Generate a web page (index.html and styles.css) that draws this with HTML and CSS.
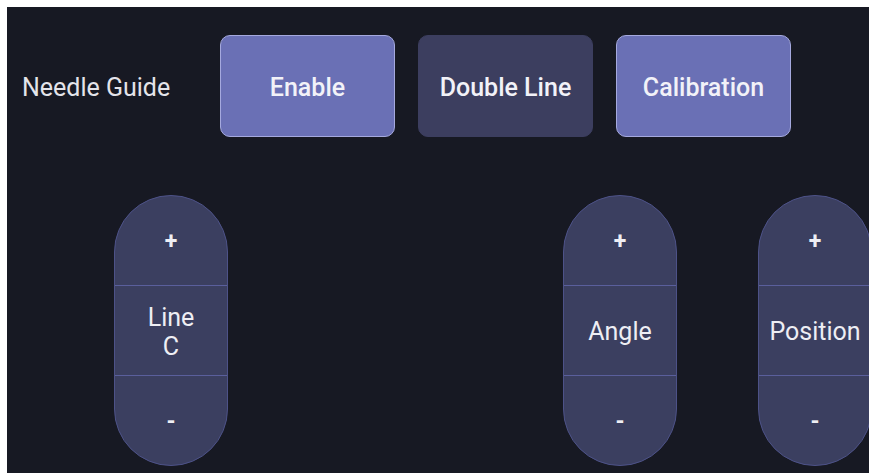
FILE: index.html
```html
<!DOCTYPE html>
<html lang="en">
<head>
  <meta charset="UTF-8">
  <meta name="viewport" content="width=device-width, initial-scale=1.0">
  <title>Needle Guide</title>
  <link rel="stylesheet" href="styles.css">
</head>

<body>
<div class="panel">
  <div class="guide-row">
    <span class="label">Needle Guide</span>
    <button class="btn on">Enable</button>
    <button class="btn">Double Line</button>
    <button class="btn on">Calibration</button>
  </div>
  <div class="pill-row">
    <div class="pill">
      <div class="step">+</div>
      <div class="name">Line<br>C</div>
      <div class="step">-</div>
    </div>
    <div class="pill angle">
      <div class="step">+</div>
      <div class="name">Angle</div>
      <div class="step">-</div>
    </div>
    <div class="pill position">
      <div class="step">+</div>
      <div class="name">Position</div>
      <div class="step">-</div>
    </div>
  </div>
</div>
</body>
</html>
```

FILE: styles.css
```css
* {
  padding: 0;
  margin: 0;
  box-sizing: border-box;
}

html {
  background: #fff;
}

body {
  padding: 7px 0 0 7px;
  overflow: hidden;
  height: 473px;
  font-family: Roboto, "Noto Sans", sans-serif;
}

.panel {
  width: 900px;
  height: 480px;
  background: #171923;
  color: #eeeef4;
}

.guide-row {
  display: flex;
  align-items: center;
  padding: 28px 0 0 15px;
}

.label {
  width: 198px;
  padding-top: 3px;
  font-size: 25px;
  color: #e4e4ea;
}

.btn {
  width: 175px;
  height: 102px;
  margin-right: 23px;
  padding-top: 3px;
  border: 1px solid #3c3e5f;
  border-radius: 10px;
  background: #3c3e5f;
  color: #f2f2f8;
  font-family: Roboto, "Noto Sans", sans-serif;
  font-size: 25px;
  font-weight: 500;
}

.btn.on {
  background: #6a70b5;
  border-color: #a5a9de;
}

.pill-row {
  display: flex;
  margin-top: 58px;
  padding-left: 107px;
}

.pill {
  width: 114px;
  height: 271px;
  border: 1px solid #4d5288;
  border-radius: 57px;
  background: #3b3f60;
  overflow: hidden;
  text-align: center;
}

.pill.angle {
  margin-left: 335px;
}

.pill.position {
  margin-left: 81px;
}

.step,
.name {
  height: 89px;
  display: flex;
  align-items: center;
  justify-content: center;
}

.step {
  padding-top: 2px;
  font-size: 23px;
  font-weight: 700;
}

.name {
  height: 91px;
  padding-top: 2px;
  border-top: 1px solid #5a5f9c;
  border-bottom: 1px solid #5a5f9c;
  font-size: 25px;
  line-height: 29px;
}
```
